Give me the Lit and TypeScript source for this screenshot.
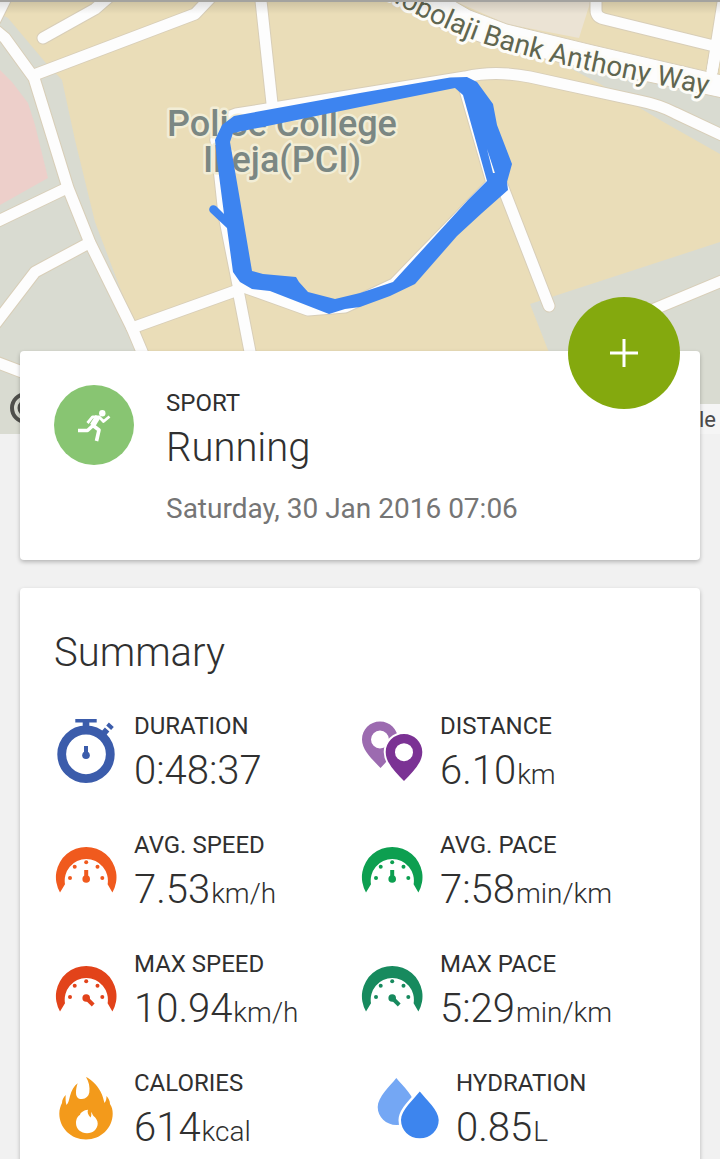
import { LitElement, html, svg, css } from "lit";
import { customElement, property } from "lit/decorators.js";

type IconName = "stopwatch" | "pins" | "gauge" | "gauge-max" | "flame" | "drops";

interface Metric {
  label: string;
  value: string;
  unit: string;
  icon: IconName;
  color: string;
  inset?: boolean;
}

const METRICS: Metric[] = [
  { label: "DURATION", value: "0:48:37", unit: "", icon: "stopwatch", color: "#3b5cab" },
  { label: "DISTANCE", value: "6.10", unit: "km", icon: "pins", color: "#7b3294" },
  { label: "AVG. SPEED", value: "7.53", unit: "km/h", icon: "gauge", color: "#f05a1e" },
  { label: "AVG. PACE", value: "7:58", unit: "min/km", icon: "gauge", color: "#0d9f50" },
  { label: "MAX SPEED", value: "10.94", unit: "km/h", icon: "gauge-max", color: "#e2431a" },
  { label: "MAX PACE", value: "5:29", unit: "min/km", icon: "gauge-max", color: "#178a5e" },
  { label: "CALORIES", value: "614", unit: "kcal", icon: "flame", color: "#f39a1b" },
  { label: "HYDRATION", value: "0.85", unit: "L", icon: "drops", color: "#3d85ee", inset: true },
];

const gaugeFace = svg`
  <path d="M6 57.5A30.3 30.3 0 1 1 58.4 57.5L53.6 49.3A21.6 21.6 0 1 0 11 49.3Z" />
  <circle cx="16" cy="43" r="2" />
  <circle cx="20.7" cy="31.7" r="2" />
  <circle cx="32.2" cy="27.3" r="2" />
  <circle cx="43.5" cy="31.7" r="2" />
  <circle cx="48.3" cy="43" r="2" />
  <circle cx="32.2" cy="44" r="3.8" />`;

const ICONS = {
  stopwatch: svg`
    <circle cx="32" cy="38.3" r="24.3" fill="none" stroke="currentColor" stroke-width="8.8" />
    <path d="M21.3 3h21.4v3.4h-7.4v5h-6.6v-5h-7.4z" />
    <path d="M30 30h4v9h-4z" />
    <circle cx="32" cy="39.3" r="3.8" />
    <g transform="rotate(42 56 10.3)"><path d="M52.7 8.3h6.6v4h-6.6zM53 14.6h6v6h-6z" /></g>`,
  pins: svg`
    <path fill="#9c6bb0" fill-rule="evenodd" d="M20 5.5C9.8 5.5 2 13.5 2 23.5C2 34 12 43 20.5 52C29 43 38 34 38 23.5C38 13.5 30 5.5 20 5.5ZM20 14.5a9 9 0 1 1 0 18a9 9 0 0 1 0-18Z" />
    <path fill-rule="evenodd" stroke="#fff" stroke-width="4" paint-order="stroke" d="M44 18C34 18 25.7 26 25.7 36C25.7 47 35.5 56 44 65C52.5 56 62.3 47 62.3 36C62.3 26 54 18 44 18Z" />
    <circle cx="44" cy="36.2" r="9" fill="#fff" />`,
  gauge: svg`${gaugeFace}<path d="M30.2 35h4v9h-4z" />`,
  "gauge-max": svg`${gaugeFace}<path d="M32.2 44l7 7" fill="none" stroke="currentColor" stroke-width="4" />`,
  flame: svg`
    <path d="M32 4C36 5.5 43 11.5 46.5 18.5C49 23 49.5 27 50.5 30C52 28 52.5 26 52.5 23C54.5 25 56 28 56 31C58 34 58.7 37 58.7 40.5C58.7 55 47 66.5 32 66.5C17 66.5 5.3 55 5.3 40.5C5.3 36.5 6.5 33 8 30C8 27 9.5 24 11.7 22C11.5 26 11.5 29 12.5 32C14.5 30 15 27 16 23C17.5 17.5 20 13 23.7 10.3C22.5 13.5 22 16.5 22 19.7C22 24 24.5 26.3 28 26C32 25.6 34.5 23.5 35.3 19.5C36 14 35 9 32 4Z" />
    <path fill="#fff" d="M34 36.8C33 39 34 42 36.5 44.5C37.5 43 37.5 41 37 39C38 40 38.5 41.5 39.5 43C42 45 43.7 47.5 43.7 50.5C43.7 56 39 60.3 33 60.3C27 60.3 22 56 22 50C22 46 24 42.5 26 42C26 40 30 37 34 36.8Z" />`,
  drops: svg`
    <path fill="#74a7f4" d="M20.3 5C27 13 39 24 39 34C39 44 31 52 20.5 52C10 52 1.7 44 1.7 34C1.7 24 14 13 20.3 5Z" />
    <path stroke="#fff" stroke-width="5" paint-order="stroke" d="M43.8 18.5C50 26.5 62.7 37 62.7 47C62.7 57.3 54.5 65.3 43.8 65.3C33 65.3 25 57.3 25 47C25 37 37.5 26.5 43.8 18.5Z" />`,
};

const ROADS = [
  "M-5 20L8-6",
  "M-6 29L5 38L34 78L68 188L90 243L132 328L148 366",
  "M34 75L195 14L214-6",
  "M43 38L95 9L110-4",
  "M260.5-4L272.5 108",
  "M-4 222L67 188",
  "M-4 323L35 272L89 243",
  "M132 328L238 290L252 362",
  "M-4 362L30 375",
  "M216 140Q216 120 236 114L360 94L465 77Q495 70 530 77L640 101Q660 105 675 113L724 136",
  "M216 140L224 215L238 285L308 310L345 307L394 284L492 183L465 90",
  "M502 185L549 306",
  "M640 315L724 280",
  "M596-4V10Q596 17 604 19L714 46M712 72L724-4",
];

@customElement("route-map")
export class RouteMap extends LitElement {
  static styles = css`
    :host {
      display: block;
      height: 434px;
      overflow: hidden;
      background: #eaddb8;
    }
    .canvas {
      display: block;
      width: 100%;
      height: 100%;
      font-family: Roboto, sans-serif;
    }
    .casing,
    .road {
      fill: none;
      stroke-linecap: round;
      stroke-linejoin: round;
    }
    .casing {
      stroke: #d8ceb8;
      stroke-width: 13px;
    }
    .road {
      stroke: #fdfdfd;
      stroke-width: 11px;
    }
    .place,
    .street {
      paint-order: stroke;
      stroke-linejoin: round;
    }
    .place {
      font-size: 36px;
      font-weight: 500;
      text-anchor: middle;
      fill: #7b8783;
      stroke: #f2edd6;
      stroke-width: 5px;
    }
    .street {
      font-size: 28px;
      fill: #606650;
      stroke: #fdfcf7;
      stroke-width: 6px;
    }
    .credit {
      font-size: 22px;
      fill: #4a4a4a;
      text-anchor: end;
    }
  `;

  render() {
    return html`
      <svg class="canvas" viewBox="0 0 720 434" preserveAspectRatio="xMidYMid slice" role="img" aria-label="Route map">
        <defs>
          <path id="avenue" d="M372-10C412 13 450 33 492 46C550 64 620 77 724 98" />
          <linearGradient id="shade" x2="0" y2="1">
            <stop offset="0" stop-color="#000" stop-opacity=".14" />
            <stop offset="1" stop-color="#000" stop-opacity="0" />
          </linearGradient>
        </defs>
        <rect width="720" height="434" fill="#eaddb8" />
        <path fill="#d9dbd1" d="M0 14L8 18L45 62L62 80L75 140L95 222L136 330L175 434H0Z" />
        <path fill="#edcfca" d="M0 70L12 82L28 103L35 125L48 178L0 205Z" />
        <path fill="#d9dbd1" d="M530 304L720 242V434H590L548 350Z" />
        <path fill="#d9dbd1" d="M555 60L720 92V154L660 120L600 84Z" />
        <path fill="#ebe3d4" d="M452 0H591L579 38L507 24Z" />
        ${ROADS.map((d) => svg`<path class="casing" d=${d} />`)}
        ${ROADS.map((d) => svg`<path class="road" d=${d} />`)}
        <path fill="#fdfdfd" stroke="#d8ceb8" d="M390-4L446-4L470 10L507 24L593 45L722 75V98L570 65L490 46L440 28Z" />
        <path class="road" d="M712 72L718 40" />
        <text class="street"><textPath href="#avenue" startOffset="7">Mobolaji Bank Anthony Way</textPath></text>
        <text class="place" x="282" y="136">Police College</text>
        <text class="place" x="282" y="172">Ikeja(PCI)</text>
        <path
          fill="#3d84f0"
          fill-rule="evenodd"
          d="M215 140L222 125L234 116L360 93L450 77.5L467 77L477 82L493 104L497 125L512 164L507 182L508 190L482 213L457 236L415 284L390 296L360 307L345 309L329 314L270 291L252 289L240 282L233 272L227 228L211 213A4 4 0 0 1 216 206L224 214L217 160ZM230 142L240 200L252 271L263 274L296 277L299 282L308 292L335 299L360 293L393 282L468 200L487 181L463 95L455 88L360 107L233 133ZM487 149L495 173L493 173Z"
        />
        <circle cx="26" cy="408" r="14" fill="none" stroke="#4f4f4b" stroke-width="4" />
        <circle cx="26" cy="408" r="7" fill="none" stroke="#4f4f4b" stroke-width="3" />
        <rect x="640" y="404" width="80" height="30" fill="#f5f5f5" />
        <text class="credit" x="716" y="427">le</text>
        <rect width="720" height="14" fill="url(#shade)" />
        <rect width="720" height="2" fill="#a3a29f" />
      </svg>
    `;
  }
}

@customElement("metric-icon")
export class MetricIcon extends LitElement {
  @property() name: IconName = "gauge";

  static styles = css`
    :host {
      display: block;
    }
    .icon {
      display: block;
      width: 64px;
      height: 72px;
      fill: currentColor;
    }
  `;

  render() {
    return html`<svg class="icon" viewBox="0 0 64 72" aria-hidden="true">${ICONS[this.name]}</svg>`;
  }
}

@customElement("app-root")
export class AppRoot extends LitElement {
  static styles = css`
    :host {
      display: flex;
      flex-direction: column;
      height: 100vh;
      overflow: hidden;
      background: #f1f1f1;
      color: #303030;
      font-family: Roboto, sans-serif;
    }
    * {
      box-sizing: border-box;
    }
    h1,
    h2,
    p,
    dl,
    dt,
    dd {
      margin: 0;
    }
    .map {
      flex: none;
    }
    .content {
      position: relative;
      flex: 1;
      display: flex;
      flex-direction: column;
      gap: 28px;
      margin-top: -83px;
      padding: 0 20px;
    }
    .card {
      padding: 34px;
      border-radius: 4px;
      background: #fff;
      box-shadow: 0 2px 4px rgba(0, 0, 0, 0.25);
    }
    .activity {
      position: relative;
      display: flex;
      gap: 32px;
    }
    .badge {
      flex: none;
      width: 80px;
      height: 80px;
    }
    .details {
      padding-top: 4px;
    }
    .label {
      font-size: 24px;
      font-weight: 400;
      line-height: 28px;
    }
    .title {
      font-size: 40px;
      font-weight: 300;
      line-height: 62px;
    }
    .unit {
      margin-left: 1px;
      font-size: 28px;
      line-height: 28px;
    }
    .date {
      margin-top: 14px;
      padding-bottom: 1px;
      font-size: 28px;
      line-height: 32px;
      color: #757575;
    }
    .add {
      position: absolute;
      top: -54px;
      right: 20px;
      display: grid;
      place-items: center;
      width: 112px;
      height: 112px;
      padding: 0;
      border: 0;
      border-radius: 50%;
      background: #84a90e;
      cursor: pointer;
    }
    .plus {
      width: 28px;
      height: 28px;
      stroke: #fff;
      stroke-width: 3px;
    }
    .summary {
      flex: 1;
      border-radius: 4px 4px 0 0;
    }
    .metrics {
      display: grid;
      grid-template-columns: 1fr 1fr;
      row-gap: 29px;
      margin-top: 28px;
    }
    .metric {
      display: grid;
      grid-template-columns: 64px 1fr;
      grid-template-rows: 28px 62px;
      column-gap: 16px;
    }
    .metric.inset {
      padding-left: 16px;
    }
    .symbol {
      grid-row: 1 / 3;
      padding-top: 4px;
    }
    .metric .label,
    .metric .title {
      grid-column: 2;
    }
  `;

  render() {
    return html`
      <route-map class="map"></route-map>
      <main class="content">
        <section class="card activity">
          <svg class="badge" viewBox="0 0 80 80" aria-hidden="true">
            <circle cx="40" cy="40" r="40" fill="#88c572" />
            <circle cx="48.3" cy="28.2" r="3.2" fill="#fff" />
            <g fill="none" stroke="#fff" stroke-width="3.6" stroke-linejoin="round">
              <path stroke-width="2.8" d="M33.5 38L38.5 31.8H45L49.5 36.5L55.5 31.5" />
              <path stroke-width="5.6" d="M44 31.5L38.5 40.5" />
              <path d="M24 45.5H33.5L39 40.5L45 45L42.5 56" />
            </g>
          </svg>
          <div class="details">
            <p class="label">SPORT</p>
            <h1 class="title">Running</h1>
            <p class="date">Saturday, 30 Jan 2016 07:06</p>
          </div>
          <button class="add" type="button" aria-label="Add">
            <svg class="plus" viewBox="0 0 28 28" aria-hidden="true"><path d="M14 0V28M0 14H28" /></svg>
          </button>
        </section>
        <section class="card summary">
          <h2 class="title">Summary</h2>
          <dl class="metrics">
            ${METRICS.map(
              (m) => html`
                <div class="metric ${m.inset ? "inset" : ""}">
                  <dt class="label">${m.label}</dt>
                  <dd class="title">${m.value}${m.unit ? html`<span class="unit">${m.unit}</span>` : ""}</dd>
                  <dd class="symbol" style="color: ${m.color}"><metric-icon name=${m.icon}></metric-icon></dd>
                </div>
              `
            )}
          </dl>
        </section>
      </main>
    `;
  }
}
